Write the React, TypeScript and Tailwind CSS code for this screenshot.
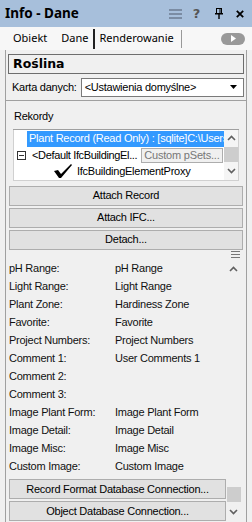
import React from 'react';

const font = { fontFamily: '"Liberation Sans", Arial, sans-serif' };

const props: [string, string][] = [
  ['pH Range:', 'pH Range'],
  ['Light Range:', 'Light Range'],
  ['Plant Zone:', 'Hardiness Zone'],
  ['Favorite:', 'Favorite'],
  ['Project Numbers:', 'Project Numbers'],
  ['Comment 1:', 'User Comments 1'],
  ['Comment 2:', ''],
  ['Comment 3:', ''],
  ['Image Plant Form:', 'Image Plant Form'],
  ['Image Detail:', 'Image Detail'],
  ['Image Misc:', 'Image Misc'],
  ['Custom Image:', 'Custom Image'],
];

const WinButton: React.FC<{ label: string; className?: string }> = ({ label, className = '' }) => (
  <div
    className={`h-[20px] flex items-center justify-center border border-[#adadad] bg-[#e1e1e1] text-[11px] text-black ${className}`}
  >
    {label}
  </div>
);

const Up = () => (
  <svg width="9" height="6" viewBox="0 0 9 6">
    <path d="M1 5 L4.5 1.5 L8 5" stroke="#606060" strokeWidth="1.6" fill="none" />
  </svg>
);
const Down = () => (
  <svg width="9" height="6" viewBox="0 0 9 6">
    <path d="M1 1 L4.5 4.5 L8 1" stroke="#606060" strokeWidth="1.6" fill="none" />
  </svg>
);

export default function App() {
  return (
    <div
      className="w-[252px] h-[522px] overflow-hidden bg-[#f0f0f0] flex flex-col tracking-[-0.25px]"
      style={font}
    >
      {/* title bar */}
      <div className="h-[27px] bg-[#a7bfdb] flex items-center pl-[5px] pr-[8px] shrink-0">
        <span
          className="text-[13.5px] font-bold text-black tracking-normal"
          style={{ fontFamily: '"Noto Sans", sans-serif' }}
        >
          Info - Dane
        </span>
        <div className="ml-auto flex items-center">
          <svg width="13" height="10" viewBox="0 0 13 10">
            <rect x="0" y="0" width="13" height="2" fill="#7b8ca3" />
            <rect x="0" y="4" width="13" height="2" fill="#7b8ca3" />
            <rect x="0" y="8" width="13" height="2" fill="#7b8ca3" />
          </svg>
          <span
            className="ml-[11px] text-[13px] font-bold text-[#555]"
            style={{ fontFamily: '"DejaVu Sans", sans-serif' }}
          >
            ?
          </span>
          <svg className="ml-[15px]" width="8" height="11" viewBox="0 0 8 11">
            <rect x="1.5" y="0.5" width="5" height="5" fill="none" stroke="#000" />
            <rect x="4.5" y="0.5" width="1" height="5" fill="#000" />
            <rect x="0" y="5" width="8" height="1.5" fill="#000" />
            <rect x="3.3" y="6" width="1.4" height="5" fill="#000" />
          </svg>
          <svg className="ml-[13px]" width="8" height="8" viewBox="0 0 8 8">
            <path d="M0.8 0.8 L7.2 7.2 M7.2 0.8 L0.8 7.2" stroke="#000" strokeWidth="1.8" />
          </svg>
        </div>
      </div>

      {/* tabs */}
      <div
        className="h-[23px] bg-[#f7f7f7] flex items-center text-[11px] text-black shrink-0 tracking-normal"
        style={{ fontFamily: '"Noto Sans", sans-serif' }}
      >
        <span className="ml-[13px]">Obiekt</span>
        <span className="ml-[14px]">Dane</span>
        <span className="ml-[5px] w-[2px] h-[20px] bg-[#222]" />
        <span className="ml-[4px]">Renderowanie</span>
        <span className="ml-[7px] w-px h-[18px] bg-[#999]" />
        <div className="ml-auto mr-[7px] w-[24px] h-[12px] rounded-full bg-[#999] flex items-center justify-center">
          <svg width="5" height="7" viewBox="0 0 5 7">
            <path d="M0 0 L5 3.5 L0 7 Z" fill="#fff" />
          </svg>
        </div>
      </div>

      {/* main frame */}
      <div className="flex-1 ml-[5px] mr-[5px] border-l border-r border-[#a0a0a0] flex flex-col min-h-0">
        <div className="mx-[2px] mt-[4px] h-[20px] border border-[#6d6d6d] flex items-center pl-[4px]">
          <span
            className="text-[12.5px] font-bold text-black tracking-normal"
            style={{ fontFamily: '"DejaVu Sans", sans-serif' }}
          >
            Roślina
          </span>
        </div>
        <div className="h-[26px] flex items-center pl-[6px] pr-[2px] text-[11px]">
          <span>Karta danych:</span>
          <div className="ml-[4px] flex-1 h-[19px] bg-white border border-[#7a7a7a] flex items-center pl-[3px] pr-[6px]">
            <span>&lt;Ustawienia domyślne&gt;</span>
            <span className="ml-auto">
              <svg width="7" height="4" viewBox="0 0 7 4">
                <path d="M0 0 L7 0 L3.5 4 Z" fill="#000" />
              </svg>
            </span>
          </div>
        </div>
        <div className="h-px bg-[#a0a0a0]" />

        {/* Rekordy */}
        <div className="mx-[8px] mt-[7px] text-[11px]">Rekordy</div>
        <div className="mx-[7px] mt-[4px] h-px bg-[#a0a0a0]" />
        <div className="mx-[7px] h-[51px] bg-white border border-t-0 border-[#d0d0d0] flex text-[11px]">
          <div className="flex-1 min-w-0 overflow-hidden flex flex-col pt-[1px]">
            <div className="h-[16px] ml-[13px] bg-[#3399ff] text-white flex items-center pl-[2px] whitespace-nowrap overflow-hidden">
              Plant Record (Read Only) : [sqlite]C:\Users
            </div>
            <div className="h-[17px] flex items-center whitespace-nowrap">
              <span className="ml-[3px] w-[9px] h-[9px] border border-[#333] flex items-center justify-center shrink-0">
                <span className="w-[5px] h-px bg-[#333]" />
              </span>
              <span className="ml-[6px] tracking-[-0.35px]">&lt;Default IfcBuildingEl...</span>
              <span className="ml-[4px] h-[15px] px-[2px] border border-[#adadad] bg-[#f0f0f0] text-[#777] flex items-center text-[11px] tracking-[-0.2px] shrink-0">
                Custom pSets...
              </span>
            </div>
            <div className="h-[15px] flex items-center whitespace-nowrap">
              <svg className="ml-[39px] shrink-0" width="20" height="14" viewBox="0 0 20 14">
                <path d="M1 7 L5 6 L8 10 L18 0 L19 1 L8 14 L6 14 Z" fill="#000" />
              </svg>
              <span className="ml-[4px]">IfcBuildingElementProxy</span>
            </div>
          </div>
          <div className="w-[14px] shrink-0 flex flex-col items-center bg-[#f5f5f5]">
            <div className="h-[17px] flex items-center"><Up /></div>
            <div className="w-[14px] h-[15px] bg-[#cdcdcd]" />
            <div className="flex-1 flex items-center"><Down /></div>
          </div>
        </div>

        <div className="mx-[3px] mt-[5px] flex flex-col gap-[2px]">
          <WinButton label="Attach Record" />
          <WinButton label="Attach IFC..." />
          <WinButton label="Detach..." />
        </div>
        <div className="h-[8px] flex justify-end pr-[6px] items-end">
          <svg width="9" height="7" viewBox="0 0 9 7">
            <rect x="0" y="0" width="9" height="1" fill="#777" />
            <rect x="0" y="3" width="9" height="1" fill="#777" />
            <rect x="0" y="6" width="9" height="1" fill="#777" />
          </svg>
        </div>

        {/* property list */}
        <div className="flex-1 flex min-h-0 mt-[2px]">
          <div className="flex-1 flex flex-col text-[11px] text-[#111]">
            <div className="flex-1">
              {props.map(([k, v]) => (
                <div key={k} className="h-[18px] flex items-center pl-[3px]">
                  <span className="w-[106px]">{k}</span>
                  <span>{v}</span>
                </div>
              ))}
            </div>
            <div className="flex flex-col gap-[2px] pl-[3px] pb-[1px]">
              <WinButton label="Record Format Database Connection..." />
              <WinButton label="Object Database Connection..." />
            </div>
          </div>
          <div className="w-[15px] mr-[5px] flex flex-col items-center">
            <div className="h-[18px] flex items-center"><Up /></div>
            <div className="flex-1" />
            <div className="w-[14px] h-[15px] bg-[#cdcdcd]" />
            <div className="h-[20px] flex items-center"><Down /></div>
          </div>
        </div>
      </div>
    </div>
  );
}
